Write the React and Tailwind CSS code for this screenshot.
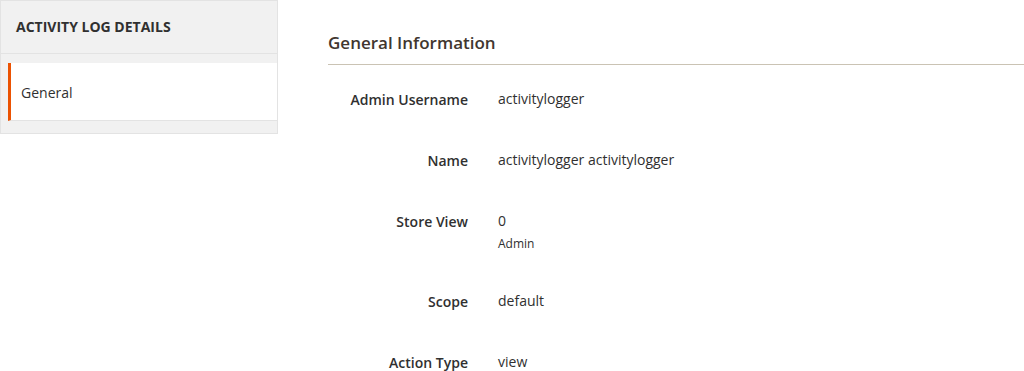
export default function App() {
  const rows = [
    { label: "Admin Username", value: "activitylogger" },
    { label: "Name", value: "activitylogger activitylogger" },
    { label: "Store View", value: "0", sub: "Admin" },
    { label: "Scope", value: "default" },
    { label: "Action Type", value: "view" },
  ];
  return (
    <div className="w-[1024px] h-[371px] overflow-hidden bg-white font-['Open_Sans',sans-serif] text-[#303030] flex items-start">
      <div className="w-[278px] shrink-0 border border-[#e3e3e3] bg-[#f1f1f1]">
        <div className="h-[53px] border-b border-[#e3e3e3] px-[15px] flex items-center font-bold text-[14px] leading-5 text-[#303030]">
          ACTIVITY LOG DETAILS
        </div>
        <div className="pt-[9px] pb-[12px] pl-[7px]">
          <div className="bg-white border-l-[3px] border-l-[#eb5202] border-b border-b-[#e3e3e3] h-[58px] flex items-center pl-[10px] pt-[2px] text-[14px] leading-5">
            General
          </div>
        </div>
      </div>
      <div className="flex-1 ml-[50px] pt-[31px]">
        <div className="text-[17px] leading-6 font-semibold text-[#41362f] pb-[9px] border-b border-[#cac3b4]">
          General Information
        </div>
        <div className="pt-[24px] flex flex-col gap-[40px]">
          {rows.map((r) => (
            <div key={r.label} className="flex items-start text-[14px] leading-5">
              <div className="w-[140px] text-right font-semibold pt-[1px]">{r.label}</div>
              <div className="pl-[30px]">
                <div>{r.value}</div>
                {r.sub && <div className="text-[12px] leading-[15px] mt-[5px]">{r.sub}</div>}
              </div>
            </div>
          ))}
        </div>
      </div>
    </div>
  );
}
